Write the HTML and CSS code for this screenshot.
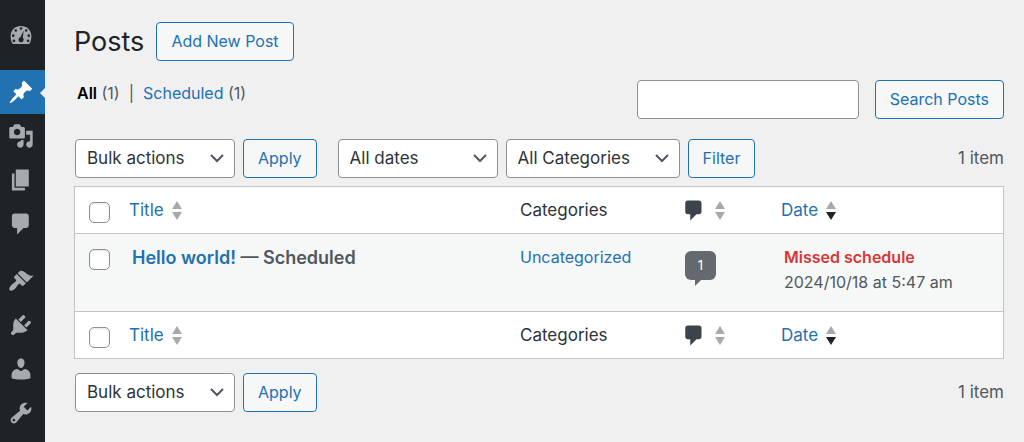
FILE: index.html
```
<!DOCTYPE html>
<html lang="en">
<head>
	<meta charset="UTF-8">
	<meta name="viewport" content="width=device-width, initial-scale=1">
	<title>Posts</title>
	<link rel="stylesheet" href="styles.css">
</head>
<body>
	<!-- shared shapes -->
	<svg class="defs" aria-hidden="true">
		<symbol id="bubble" viewBox="0 0 20 20"><path d="M5 2h9c1.1 0 2 .9 2 2v7c0 1.1-.9 2-2 2h-2l-5 5v-5H5c-1.1 0-2-.9-2-2V4c0-1.1.9-2 2-2z"/></symbol>
		<symbol id="up" viewBox="0 0 10 8"><path d="M5 0l5 8H0z"/></symbol>
		<symbol id="down" viewBox="0 0 10 8"><path d="M0 0h10L5 8z"/></symbol>
	</svg>

	<div class="wrapper">
		<nav class="menu" aria-label="Main menu">
			<a href="#" aria-label="Dashboard"><svg viewBox="0 0 20 20"><path fill-rule="evenodd" d="M3.76 17h12.48C17.4 15.4 18 13.3 18 11c0-4.97-3.58-8-8-8s-8 3.03-8 8c0 2.3.6 4.4 1.76 6zM10 4a1 1 0 1 1 0 2 1 1 0 0 1 0-2zM6 5.5a1 1 0 1 1 0 2 1 1 0 0 1 0-2zM14 5.5a1 1 0 1 1 0 2 1 1 0 0 1 0-2zM4 9.5a1 1 0 1 1 0 2 1 1 0 0 1 0-2zM16 9.5a1 1 0 1 1 0 2 1 1 0 0 1 0-2zM12 6.8l-.6 5.4c.5.4.8 1 .6 1.8-.2 1-1.1 1.7-2.1 1.6-1.2-.1-2-1.2-1.8-2.3.1-.8.7-1.4 1.4-1.6zM4.6 13.5a1 1 0 1 1 0 2 1 1 0 0 1 0-2zM15.4 13.5a1 1 0 1 1 0 2 1 1 0 0 1 0-2z"/></svg></a>
			<a href="#" class="current separated" aria-label="Posts"><svg viewBox="0 0 20 20"><path d="M10.44 3.02l1.82-1.82 6.36 6.35-1.83 1.82c-1.05-.68-2.48-.57-3.41.36l-.75.75c-.92.93-1.04 2.35-.35 3.41l-1.83 1.82-2.41-2.41-2.8 2.79c-.42.42-3.38 2.71-3.8 2.29s1.86-3.39 2.28-3.81l2.79-2.79L4.1 9.36l1.83-1.82c1.05.69 2.48.57 3.4-.36l.75-.75c.93-.92 1.05-2.35.36-3.41z"/></svg></a>
			<a href="#" aria-label="Media"><svg viewBox="0 0 20 20"><path d="M13 11V4c0-.55-.45-1-1-1h-1.67L9 1H5L3.67 3H2c-.55 0-1 .45-1 1v7c0 .55.45 1 1 1h10c.55 0 1-.45 1-1zM7 4.5c1.38 0 2.5 1.12 2.5 2.5S8.38 9.5 7 9.5 4.5 8.38 4.5 7 5.62 4.5 7 4.5zM14 6h5v10.5c0 1.38-1.12 2.5-2.5 2.5S14 17.88 14 16.5s1.12-2.5 2.5-2.5c.17 0 .34.02.5.05V9h-3V6zm-4 8.05V13h2v3.5c0 1.38-1.12 2.5-2.5 2.5S7 17.88 7 16.5 8.12 14 9.5 14c.17 0 .34.02.5.05z"/></svg></a>
			<a href="#" aria-label="Pages"><svg viewBox="0 0 20 20"><path d="M6 15V2h10v13H6zm-1 1h8v2H3V5h2v11z"/></svg></a>
			<a href="#" aria-label="Comments"><svg><use href="#bubble"/></svg></a>
			<a href="#" class="separated" aria-label="Appearance"><svg viewBox="0 0 20 20"><path d="M14.48 11.06L7.41 3.99l1.5-1.5c.5-.56 2.3-.47 3.51.32 1.21.8 1.43 1.28 2.91 2.1 1.18.64 2.45 1.26 4.45.85zm-.71.71L6.7 4.7 4.93 6.47c-.39.39-.39 1.02 0 1.41l1.06 1.06c.39.39.39 1.03 0 1.42-.6.6-1.43 1.11-2.21 1.69-.35.26-.7.53-1.01.84C1.43 14.23.4 16.08 1.4 17.07c.99 1 2.84-.03 4.18-1.36.31-.31.58-.66.85-1.02.57-.78 1.08-1.61 1.69-2.21.39-.39 1.02-.39 1.41 0l1.06 1.06c.39.39 1.02.39 1.41 0z"/></svg></a>
			<a href="#" aria-label="Plugins"><svg viewBox="0 0 20 20"><path d="M13.11 4.36L9.87 7.6 8 5.73l3.24-3.24c.35-.34 1.05-.2 1.56.32.52.51.66 1.21.31 1.55zm-8 1.77l.91-1.12 9.01 9.01-1.19.84c-.71.71-2.63 1.16-3.82 1.16H6.14L4.9 17.26c-.59.59-1.54.59-2.12 0-.59-.58-.59-1.53 0-2.12l1.24-1.24v-3.88c0-1.13.4-3.19 1.09-3.89zm7.26 3.97l3.24-3.24c.34-.35 1.04-.21 1.55.31.52.51.66 1.21.31 1.55l-3.24 3.25z"/></svg></a>
			<a href="#" aria-label="Users"><svg viewBox="0 0 20 20"><path d="M10 9.25c-2.27 0-2.73-3.44-2.73-3.44C7 4.02 7.82 2 9.97 2c2.16 0 2.98 2.02 2.71 3.81 0 0-.41 3.44-2.68 3.44zm0 2.57L12.72 10c2.39 0 4.52 2.33 4.52 4.53v2.49s-3.65 1.13-7.24 1.13c-3.65 0-7.24-1.13-7.24-1.13v-2.49c0-2.25 1.94-4.48 4.47-4.48z"/></svg></a>
			<a href="#" aria-label="Tools"><svg viewBox="0 0 20 20"><path d="M16.68 9.77c-1.34 1.34-3.3 1.67-4.95.99l-5.41 6.52c-.99.99-2.59.99-3.58 0s-.99-2.59 0-3.57l6.52-5.42c-.68-1.65-.35-3.61.99-4.95 1.28-1.28 3.12-1.62 4.72-1.06l-2.89 2.89 2.82 2.82 2.86-2.87c.53 1.58.18 3.39-1.08 4.65zM3.81 16.21c.4.39 1.04.39 1.43 0 .4-.4.4-1.04 0-1.43-.39-.4-1.03-.4-1.43 0-.39.39-.39 1.03 0 1.43z"/></svg></a>
		</nav>

		<main class="content">
			<header class="heading">
				<h1>Posts</h1>
				<a href="#" class="button">Add New Post</a>
			</header>

			<div class="toolbar">
				<ul class="views">
					<li><a href="#" class="current">All</a> (1)</li>
					<li class="bar">|</li>
					<li><a href="#">Scheduled</a> (1)</li>
				</ul>
				<form class="search">
					<input type="search" aria-label="Search Posts">
					<button type="button" class="button">Search Posts</button>
				</form>
			</div>

			<div class="tablenav">
				<div class="group">
					<select class="bulk" aria-label="Select bulk action"><option>Bulk actions</option></select>
					<button type="button" class="button">Apply</button>
				</div>
				<div class="group">
					<select class="dates" aria-label="Filter by date"><option>All dates</option></select>
					<select class="cats" aria-label="Filter by category"><option>All Categories</option></select>
					<button type="button" class="button">Filter</button>
				</div>
				<span class="count">1 item</span>
			</div>

			<table class="posts">
				<thead>
					<tr>
						<th class="col-check"><input type="checkbox" aria-label="Select all"></th>
						<th class="col-title"><a href="#" class="sort">Title <span class="arrows"><svg><use href="#up"/></svg><svg><use href="#down"/></svg></span></a></th>
						<th class="col-cats">Categories</th>
						<th class="col-comments"><a href="#" class="sort" aria-label="Comments"><svg class="icon"><use href="#bubble"/></svg><span class="arrows"><svg><use href="#up"/></svg><svg><use href="#down"/></svg></span></a></th>
						<th class="col-date"><a href="#" class="sort">Date <span class="arrows desc"><svg><use href="#up"/></svg><svg><use href="#down"/></svg></span></a></th>
					</tr>
				</thead>
				<tbody>
					<tr>
						<td class="col-check"><input type="checkbox" aria-label="Select Hello world!"></td>
						<td class="col-title"><strong><a href="#">Hello world!</a> — Scheduled</strong></td>
						<td class="col-cats"><a href="#">Uncategorized</a></td>
						<td class="col-comments"><a href="#" class="comment-count">1</a></td>
						<td class="col-date"><strong class="missed">Missed schedule</strong><br>2024/10/18 at 5:47 am</td>
					</tr>
				</tbody>
				<tfoot>
					<tr>
						<th class="col-check"><input type="checkbox" aria-label="Select all"></th>
						<th class="col-title"><a href="#" class="sort">Title <span class="arrows"><svg><use href="#up"/></svg><svg><use href="#down"/></svg></span></a></th>
						<th class="col-cats">Categories</th>
						<th class="col-comments"><a href="#" class="sort" aria-label="Comments"><svg class="icon"><use href="#bubble"/></svg><span class="arrows"><svg><use href="#up"/></svg><svg><use href="#down"/></svg></span></a></th>
						<th class="col-date"><a href="#" class="sort">Date <span class="arrows desc"><svg><use href="#up"/></svg><svg><use href="#down"/></svg></span></a></th>
					</tr>
				</tfoot>
			</table>

			<div class="tablenav bottom">
				<div class="group">
					<select class="bulk" aria-label="Select bulk action"><option>Bulk actions</option></select>
					<button type="button" class="button">Apply</button>
				</div>
				<span class="count">1 item</span>
			</div>
		</main>
	</div>
</body>
</html>
```
FILE: styles.css
```
*{
	box-sizing: border-box;
}
body{
	margin: 0;
	background: #f0f0f1;
	color: #50575e;
	font: 16px/25px Inter, "Liberation Sans", sans-serif;
}
a{
	color: #2271b1;
	text-decoration: none;
}
.defs{
	display: none;
}
.wrapper{
	display: flex;
	min-height: 100vh;
}

/* menu */
.menu{
	flex: none;
	width: 45px;
	padding-top: 13px;
	background: #1d2327;
}
.menu a{
	display: flex;
	align-items: center;
	height: 44px;
	padding-left: 8px;
	color: #a7aaad;
}
.menu svg{
	width: 26px;
	height: 26px;
	fill: currentColor;
}
.menu .separated{
	margin-top: 13px;
}
.menu .current{
	position: relative;
	background: #2271b1;
	color: #fff;
}
/* notch pointing at the open page */
.menu .current::after{
	content: "";
	position: absolute;
	right: 0;
	top: 18px;
	border: 5px solid transparent;
	border-left-width: 0;
	border-right-color: #f0f0f1;
}

/* content */
.content{
	flex: 1;
	min-width: 0;
	padding: 22px 20px 20px 29px;
}
.heading{
	display: flex;
	align-items: center;
	gap: 12px;
}
h1{
	margin: 0;
	color: #1d2327;
	font-size: 27px;
	font-weight: 400;
	line-height: 38px;
}
.button{
	height: 39px;
	padding: 0 14px;
	border: 1px solid #2271b1;
	border-radius: 4px;
	background: #f6f7f7;
	color: #2271b1;
	font: 16px/37px Inter, "Liberation Sans", sans-serif;
	white-space: nowrap;
}
.toolbar{
	display: flex;
	justify-content: space-between;
	align-items: flex-start;
	margin: 19px 0 20px;
}
.views{
	display: flex;
	gap: 9px;
	margin: 0;
	padding: 0 0 0 3px;
	line-height: 27px;
	list-style: none;
}
.views .current{
	color: #000;
	font-weight: 600;
}
.search{
	display: flex;
	gap: 16px;
}
.search input{
	width: 222px;
	height: 39px;
	margin: 0;
	border: 1px solid #8c8f94;
	border-radius: 4px;
	background: #fff;
}

/* filters above and below the table */
.tablenav{
	display: flex;
	align-items: center;
	gap: 21px;
	padding-left: 1px;
	margin-bottom: 8px;
}
.tablenav.bottom{
	margin: 14px 0 0;
}
.group{
	display: flex;
	gap: 8px;
}
.count{
	margin-left: auto;
	font-size: 17px;
}
select{
	height: 39px;
	padding: 0 30px 0 11px;
	border: 1px solid #8c8f94;
	border-radius: 4px;
	appearance: none;
	background: #fff url("data:image/svg+xml,%3Csvg xmlns='http://www.w3.org/2000/svg' width='14' height='9'%3E%3Cpath d='M1 1l6 6 6-6' fill='none' stroke='%2350575e' stroke-width='2'/%3E%3C/svg%3E") no-repeat right 10px center;
	color: #2c3338;
	font: 17px/37px Inter, "Liberation Sans", sans-serif;
}
.bulk,
.dates{
	width: 160px;
}
.cats{
	width: 174px;
}

/* table */
.posts{
	width: 100%;
	table-layout: fixed;
	border: 1px solid #c3c4c7;
	border-spacing: 0;
	background: #fff;
}
.posts th,
.posts td{
	padding: 11px 10px 10px;
	text-align: left;
	vertical-align: top;
}
.posts th{
	height: 46px;
	color: #2c3338;
	font-size: 17px;
	font-weight: 400;
}
.posts td{
	height: 79px;
	border: 1px solid #c3c4c7;
	border-width: 1px 0;
	background: #f6f7f7;
}
.posts td.col-title,
.posts td.col-date{
	padding-left: 13px;
}
.posts strong{
	font-weight: 600;
}
.posts td.col-title{
	font-size: 18px;
}
.posts .missed{
	color: #d63638;
}
.posts .col-check{
	width: 44px;
	padding: 15px 0 0 14px;
}
.col-cats{
	width: 164px;
}
.col-comments{
	width: 97px;
}
.col-date{
	width: 232px;
}
.posts input{
	display: block;
	width: 21px;
	height: 21px;
	margin: 0;
	border: 1px solid #8c8f94;
	border-radius: 5px;
	appearance: none;
	background: #fff;
	box-shadow: inset 0 1px 2px rgba(0, 0, 0, .1);
}
.posts input:checked{
	background: #2271b1;
}
.sort{
	display: flex;
	align-items: center;
	gap: 8px;
}
.arrows{
	display: grid;
	gap: 3px;
	color: #a7aaad;
}
.arrows svg{
	width: 10px;
	height: 8px;
	fill: currentColor;
}
.desc svg:last-child{
	color: #1d2327;
}
.sort .icon{
	width: 26px;
	height: 25px;
	margin-left: -3px;
	fill: #3c434a;
}
.comment-count{
	display: block;
	position: relative;
	width: 31px;
	height: 29px;
	margin: 6px 0 0 1px;
	border-radius: 6px;
	background: #646970;
	color: #fff;
	font-size: 13px;
	line-height: 29px;
	text-align: center;
}
/* tail of the comment bubble */
.comment-count::after{
	content: "";
	position: absolute;
	left: 10px;
	top: 28px;
	border-top: 7px solid #646970;
	border-right: 7px solid transparent;
}
```
